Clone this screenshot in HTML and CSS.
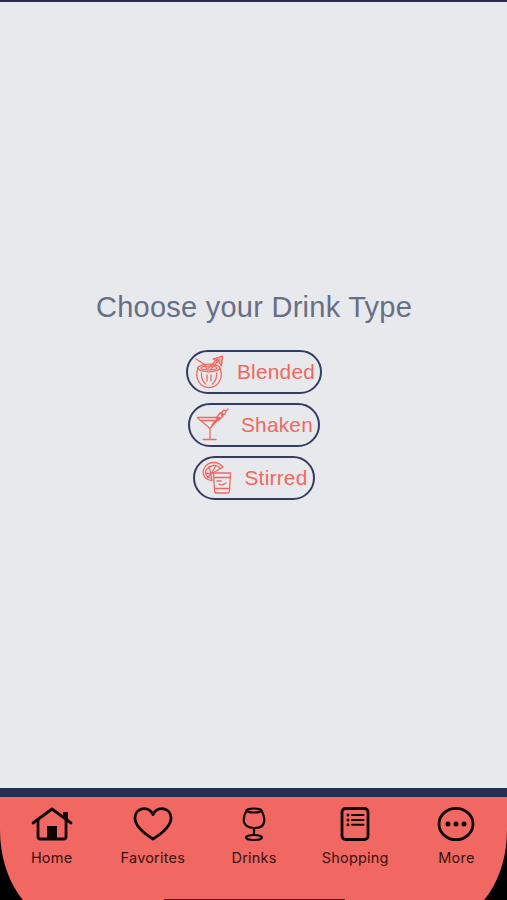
FILE: index.html
```html
<!DOCTYPE html>
<html lang="en">
<head>
    <meta charset="UTF-8">
    <meta name="viewport" content="width=device-width, initial-scale=1.0">
    <title>Drink Type</title>
    <link rel="stylesheet" href="styles.css">
</head>
<body>
    <main class="content">
        <h1>Choose your Drink Type</h1>
        <button class="drink">
            <svg class="blended" width="30" height="34" viewBox="0 0 30 34">
                <path d="M1 4l8 5 3 5M16 14l8-9M13.500 13l9-9"/>
                <path d="M18 4l9.500-3-1 10-2.500-4z" fill="currentColor" fill-opacity=".5"/>
                <ellipse cx="14" cy="13" rx="11" ry="3.800"/>
                <ellipse cx="14" cy="13" rx="8" ry="1.800"/>
                <path d="M3 13c-4 10 2 19.500 11 19.500s15-9.500 11-19.500M6.500 18c-.5 5 1 8 4 11M21.500 18c.5 5-1 8-4 11M12 20v6M16 20v6"/>
            </svg>
            <span>Blended</span>
        </button>
        <button class="drink">
            <svg class="shaken" width="32" height="34" viewBox="0 0 32 34">
                <path d="M0 9.500h23L13 20.500v11M0 9.500l13 11M6 31.500h13M4 12.500h15M15 17l6-7"/>
                <path d="M19 10l4-5 3 .5-.5 3-4 4zM24 5l3-3 2 1-1 3-3 2zM29 3l2-2"/>
            </svg>
            <span>Shaken</span>
        </button>
        <button class="drink">
            <svg class="stirred" width="30" height="34" viewBox="0 0 30 34">
                <path d="M10 19.500C2 19-1 12 3 6 7 0 16 0 21 6l-12 7zM8 17C4 16 2 11 5 8c3-4 9-5 13-1M9 13L3.500 12M9 13L7 5.500M9 13l5-8.500M9 13l-4 4"/>
                <path d="M11.500 12h17l-1 18q-.2 2-2 2h-11q-2 0-2-2zM12 16.500h16M13 27.500h14.500M15 20h4M17 23q3 2 7-1"/>
            </svg>
            <span>Stirred</span>
        </button>
    </main>
    <nav class="nav">
        <div class="tabs">
            <a class="tab">
                <svg width="42" height="36" viewBox="0 0 42 36">
                    <path d="M2 17L21 3l19 14M7 14v16.500q0 2.500 2.500 2.500h23q2.500 0 2.500-2.500V14"/>
                    <path d="M16 33V20h10v13zM32 6h5v9l-5-4z" fill="currentColor" stroke="none"/>
                </svg>
                <span>Home</span>
            </a>
            <a class="tab">
                <svg width="42" height="36" viewBox="0 0 42 36">
                    <path d="M21 33C13 28 3 21 3 12 3 2 16-1 21 8.500 26-1 39 2 39 12 39 21 29 28 21 33z"/>
                </svg>
                <span>Favorites</span>
            </a>
            <a class="tab">
                <svg class="glass" width="42" height="36" viewBox="0 0 42 36">
                    <path d="M13.500 4.500C9 13 9 21.500 21 22S33 13 28.500 4.500M21 22V29"/>
                    <ellipse cx="21" cy="4.500" rx="7.500" ry="2"/>
                    <ellipse cx="21" cy="31.500" rx="8" ry="2.500"/>
                </svg>
                <span>Drinks</span>
            </a>
            <a class="tab">
                <svg width="42" height="36" viewBox="0 0 42 36">
                    <rect x="8" y="2.500" width="26" height="31" rx="3.500"/>
                    <path class="lines" d="M18 9h11.500M18 14h11.500M18 18.700h11.500"/>
                    <path class="dots" d="M14 9h.01M14 14h.01M14 18.700h.01"/>
                </svg>
                <span>Shopping</span>
            </a>
            <a class="tab">
                <svg width="42" height="36" viewBox="0 0 42 36">
                    <ellipse cx="21" cy="18" rx="17" ry="15.700"/>
                    <path class="more-dots" d="M13 18h.01M21 18h.01M29 18h.01"/>
                </svg>
                <span>More</span>
            </a>
        </div>
        <div class="home-indicator"></div>
    </nav>
</body>
</html>
```
FILE: styles.css
```css
body {
    margin: 0;
    height: 100vh;
    overflow: hidden;
    display: flex;
    flex-direction: column;
    background-color: #e7e9ed;
    font-family: "Liberation Sans", Arial, sans-serif;
}
svg {
    display: block;
    fill: none;
    stroke: currentColor;
    stroke-linecap: round;
    stroke-linejoin: round;
}
.content {
    flex: 1;
    display: flex;
    flex-direction: column;
    align-items: center;
    justify-content: center;
    gap: 9px;
    padding-left: 1px;
    border-top: 2px solid #292b55;
}
h1 {
    margin: 0 0 17px;
    color: #676f87;
    font-size: 29px;
    font-weight: normal;
    line-height: 34px;
    letter-spacing: 0.25px;
}
.drink {
    box-sizing: border-box;
    height: 44px;
    display: flex;
    align-items: center;
    gap: 12px;
    padding: 0 5px 0 7px;
    border: 2px solid #343c60;
    border-radius: 22px;
    background: none;
    color: #f0685f;
    font-family: inherit;
    font-size: 20.8px;
    letter-spacing: 0.25px;
}
.drink svg {
    stroke-width: 1.3;
}
.nav {
    position: relative;
    height: 103px;
    overflow: hidden;
    border-top: 9px solid #252f52;
    background-color: #000;
}
/* taller than the nav so only the start of the rounded corners shows */
.tabs {
    box-sizing: border-box;
    height: 123px;
    display: flex;
    padding: 9px 0 0 1px;
    background-color: #f06861;
    border-radius: 0 0 62px 62px / 0 0 90px 90px;
}
.tab {
    flex: 1 0 20%;
    display: flex;
    flex-direction: column;
    align-items: center;
    gap: 6px;
    color: #100505;
    font-family: Inter, sans-serif;
    font-size: 14.5px;
    line-height: 20px;
    letter-spacing: 0.2px;
}
.tab span {
    color: #3a100f;
}
.tab svg {
    stroke-width: 2.8;
}
.tab .glass {
    stroke-width: 2.2;
}
.tab .lines {
    stroke-width: 2;
}
.tab .dots {
    stroke-width: 3;
}
.tab .more-dots {
    stroke-width: 5;
}
.home-indicator {
    position: absolute;
    left: 164px;
    bottom: 0;
    width: 181px;
    height: 1px;
    background-color: #4a1e1e;
}
```
